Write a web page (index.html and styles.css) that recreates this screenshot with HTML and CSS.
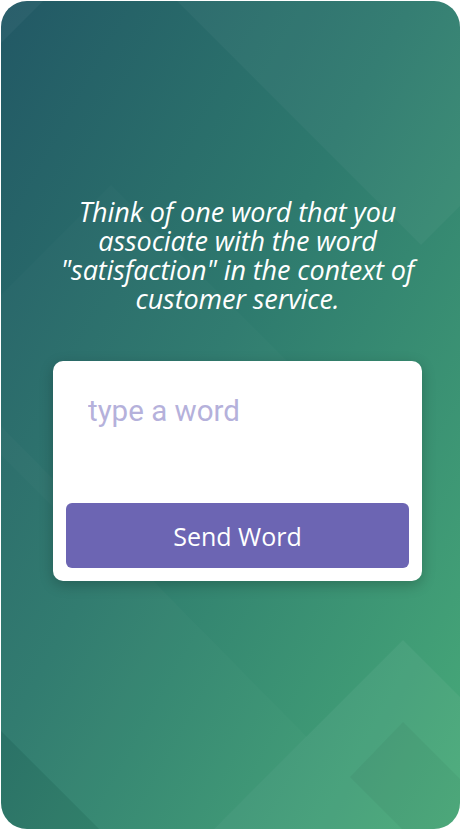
FILE: index.html
```html
<!DOCTYPE html>
<html lang="en">
<head>
<meta charset="utf-8">
<title>Word prompt</title>
<link rel="stylesheet" href="styles.css">
</head>
<body>
<div class="frame">
  <svg class="bg" viewBox="0 0 459 828" preserveAspectRatio="none" aria-hidden="true">
    <defs>
      <linearGradient id="g" x1="0" y1="0" x2="1" y2="1">
        <stop offset="0" stop-color="#225865"/>
        <stop offset="0.45" stop-color="#2e7a6e"/>
        <stop offset="1" stop-color="#48ab79"/>
      </linearGradient>
    </defs>
    <rect width="459" height="828" fill="url(#g)"/>
    <polygon points="0,0 42,0 0,42" fill="#fff" opacity="0.04"/>
    <polygon points="175,-1 420,244 460,204 460,-1" fill="#fff" opacity="0.035"/>
    <polygon points="110,184 300,374 110,564 -80,374" fill="#fff" opacity="0.015"/>
    <polygon points="-1,424 306,736 212,829 99,829 -1,729" fill="#fff" opacity="0.02"/>
    <polygon points="402,639 460,697 460,829 212,829" fill="#fff" opacity="0.05"/>
    <polygon points="402,721 460,779 460,829 402,829 349,776" fill="#000" opacity="0.04"/>
    <polygon points="-1,729 99,829 -1,829" fill="#000" opacity="0.06"/>
  </svg>
  <div class="content">
    <p class="prompt">Think of one word that you<br>associate with the word<br>"satisfaction" in the context of<br>customer service.</p>
    <form class="card">
      <input class="word" type="text" placeholder="type a word">
      <button class="send" type="button">Send Word</button>
    </form>
  </div>
</div>
</body>
</html>
```

FILE: styles.css
```css
html, body {
  margin: 0;
  padding: 0;
  background: #ffffff;
}

.frame {
  position: relative;
  margin: 1px;
  width: 459px;
  height: 828px;
  border-radius: 26px;
  overflow: hidden;
}

.bg {
  position: absolute;
  left: 0;
  top: 0;
  width: 100%;
  height: 100%;
  display: block;
}

.content {
  position: relative;
  display: flex;
  flex-direction: column;
  padding: 196px 0 0 52px;
}

.prompt {
  margin: 0;
  width: 369px;
  font-family: "Open Sans", "DejaVu Sans", sans-serif;
  font-style: italic;
  font-size: 27px;
  line-height: 29px;
  color: #ffffff;
  text-align: center;
  letter-spacing: -0.1px;
  white-space: nowrap;
}

.card {
  margin: 48px 0 0 0;
  width: 369px;
  box-sizing: border-box;
  padding: 30px 13px 13px;
  background: #ffffff;
  border-radius: 10px;
  box-shadow: 0 4px 14px rgba(0, 0, 0, 0.22);
  display: flex;
  flex-direction: column;
}

.word {
  height: 40px;
  margin: 0 0 72px 0;
  padding: 0 0 0 22px;
  border: none;
  outline: none;
  background: transparent;
  font-family: Roboto, "Liberation Sans", sans-serif;
  font-size: 29.5px;
  color: #333;
}

.word::placeholder {
  color: #b5b1db;
  opacity: 1;
}

.send {
  height: 65px;
  border: none;
  border-radius: 6px;
  background: #6c65b3;
  color: #ffffff;
  font-family: "Open Sans", "DejaVu Sans", sans-serif;
  font-size: 25px;
  padding: 0;
}
```
